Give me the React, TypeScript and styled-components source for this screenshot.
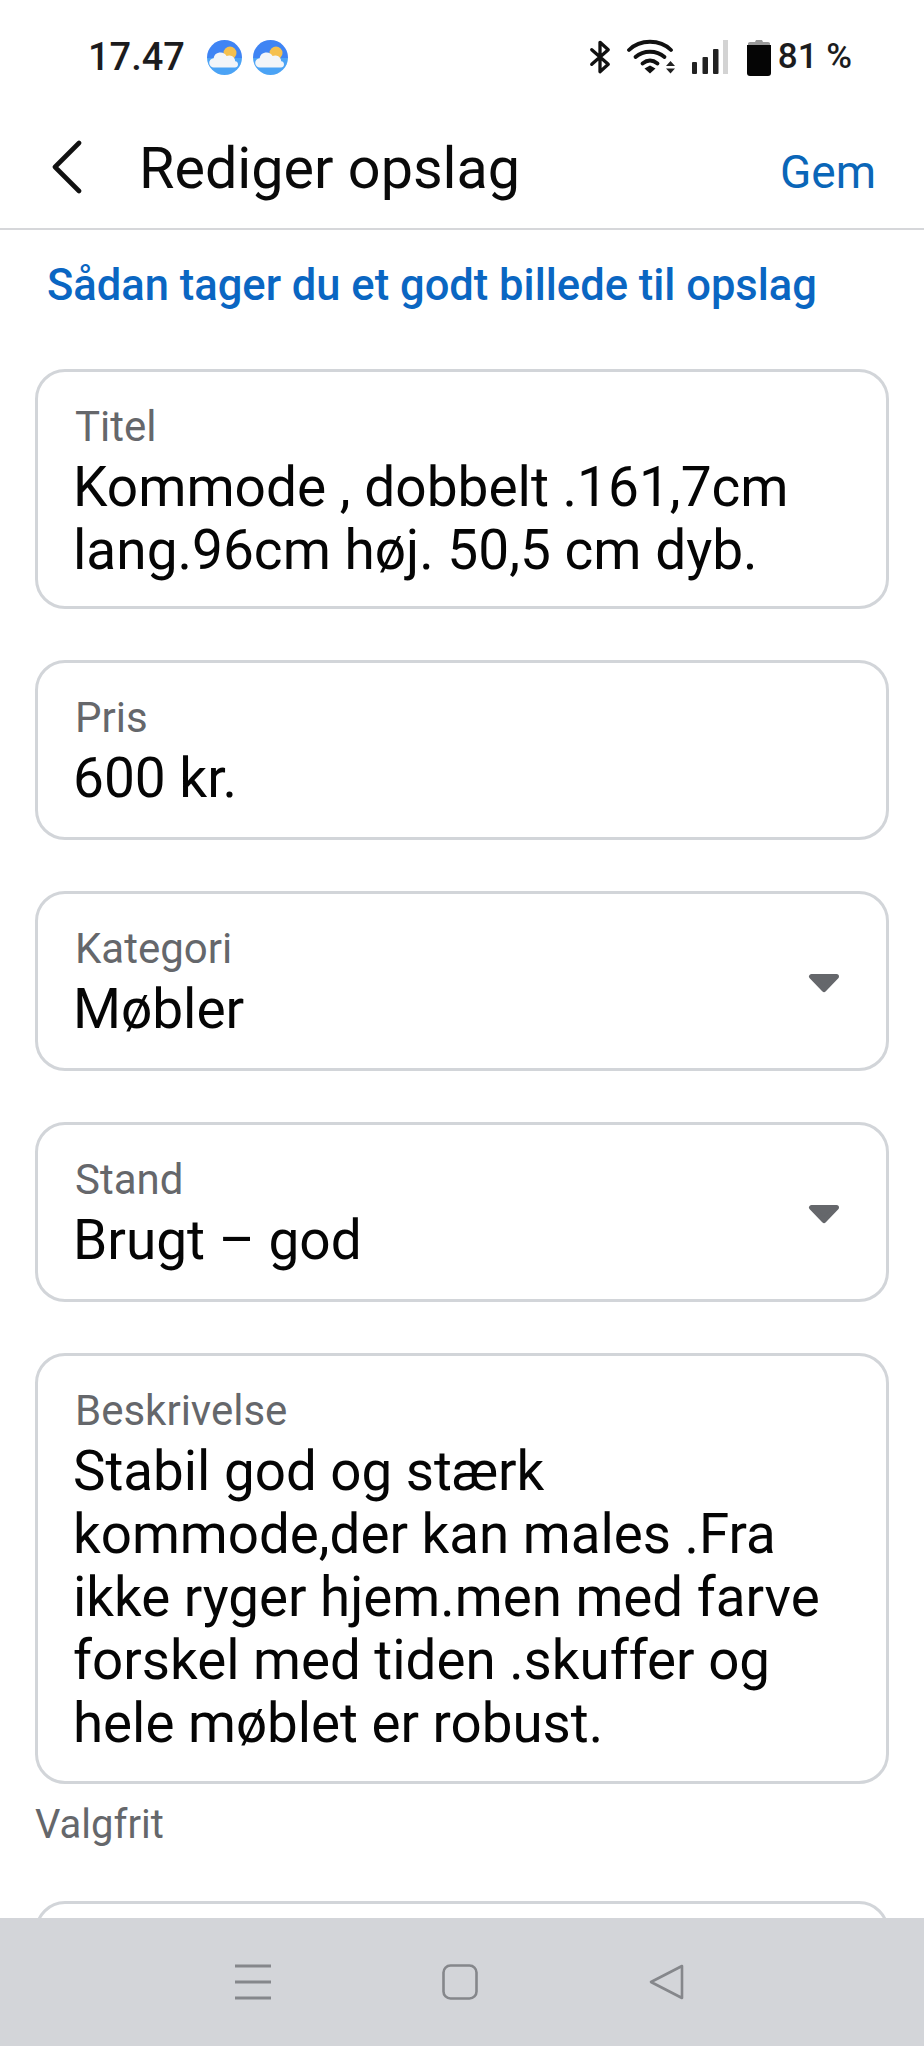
import React from "react";
import styled, { createGlobalStyle } from "styled-components";

const Global = createGlobalStyle`
  html, body { margin: 0; padding: 0; background: #fff; }
  * { box-sizing: border-box; }
  body { font-family: Roboto, "Liberation Sans", sans-serif; }
`;

const Screen = styled.div`
  width: 924px;
  height: 2046px;
  display: flex;
  flex-direction: column;
  overflow: hidden;
  background: #fff;
`;

const StatusBar = styled.div`
  height: 100px;
  flex: none;
  padding: 36px 72px 0 88px;
  display: flex;
  align-items: flex-start;
  justify-content: space-between;
`;

const StatusGroup = styled.div`
  display: flex;
  align-items: center;
`;

const Clock = styled.span`
  font-size: 38px;
  line-height: 42px;
  font-weight: 500;
  color: #1c1c1e;
  margin-right: 22px;
`;

const WeatherIcon = styled.svg`
  width: 35px;
  height: 35px;
  margin-right: 11px;
`;

const StatusIcon = styled.svg<{ $gap?: number }>`
  display: block;
  flex: none;
  margin-right: ${(p) => p.$gap ?? 0}px;
`;

const Battery = styled.span`
  font-size: 35px;
  line-height: 42px;
  font-weight: 500;
  color: #1c1c1e;
  margin-left: 7px;
  white-space: pre;
`;

const Header = styled.header`
  height: 130px;
  flex: none;
  display: flex;
  align-items: center;
  padding: 6px 48px 0 52px;
  border-bottom: 2px solid #d6d7da;
`;

const BackIcon = styled.svg`
  width: 30px;
  height: 54px;
  flex: none;
  margin-right: 57px;
`;

const Title = styled.h1`
  flex: 1;
  margin: 3px 0 0;
  font-size: 57.5px;
  line-height: 64px;
  font-weight: 400;
  color: #0a0a0a;
`;

const SaveLink = styled.span`
  font-size: 46px;
  line-height: 60px;
  color: #0a66b8;
  margin-top: 10px;
`;

const Content = styled.main`
  flex: 1;
  min-height: 0;
  overflow: hidden;
  padding: 30px 35px 0 35px;
`;

const HelpLink = styled.div`
  font-size: 43.5px;
  line-height: 52px;
  font-weight: 500;
  color: #0a66c2;
  height: 109px;
  margin-left: 12px;
`;

const Fields = styled.div`
  display: flex;
  flex-direction: column;
  gap: 51px;
`;

const Card = styled.div`
  position: relative;
  border: 3px solid #d2d5d9;
  border-radius: 30px;
  padding: 32px 35px 0;
  background: #fff;
`;

const Label = styled.div`
  font-size: 42px;
  line-height: 46px;
  color: #65676b;
  margin-left: 2px;
`;

const Value = styled.div<{ $bottom?: number; $size?: number }>`
  font-size: ${(p) => p.$size ?? 55}px;
  line-height: 63px;
  color: #050505;
  margin-top: 6px;
  padding-bottom: ${(p) => p.$bottom ?? 27}px;
`;

const Caret = styled.svg`
  position: absolute;
  right: 46px;
  top: 79px;
  width: 32px;
  height: 20px;
`;

const Hint = styled.div`
  font-size: 40px;
  line-height: 46px;
  color: #65676b;
  margin: 18px 0 53px;
`;

const EmptyCard = styled.div`
  height: 100px;
  border: 3px solid #d2d5d9;
  border-radius: 30px;
`;

const NavBar = styled.nav`
  height: 128px;
  flex: none;
  background: #d3d5d9;
  display: flex;
  align-items: flex-start;
  justify-content: center;
  gap: 171px;
  padding: 46px 5px 0 0;
`;

const NavIcon = styled.svg`
  width: 36px;
  height: 36px;
  display: block;
`;

const Weather = () => (
  <WeatherIcon viewBox="0 0 35 35">
    <defs>
      <clipPath id="wc">
        <circle cx="17.5" cy="17.5" r="17.5" />
      </clipPath>
    </defs>
    <g clipPath="url(#wc)">
      <rect width="35" height="18" fill="#3f84f4" />
      <rect y="18" width="35" height="17" fill="#4ba3f5" />
      <circle cx="23" cy="13" r="6.5" fill="#f5c04e" />
      <path
        d="M7 27.5a4.6 4.6 0 0 1-.4-9.2 7 7 0 0 1 13-2.2 6 6 0 0 1 8.6 5.2 3.2 3.2 0 0 1 2.8 3.2c0 1.8-1.4 3-3 3z"
        fill="#f2f5f9"
      />
    </g>
  </WeatherIcon>
);

const Dropdown = () => (
  <Caret viewBox="0 0 32 20">
    <path d="M3.5 3.500h25L16 16.500z" fill="#65676b" stroke="#65676b" strokeWidth="5" strokeLinejoin="round" />
  </Caret>
);

export default function App() {
  return (
    <Screen>
      <Global />
      <StatusBar>
        <StatusGroup>
          <Clock>17.47</Clock>
          <Weather />
          <Weather />
        </StatusGroup>
        <StatusGroup>
          <StatusIcon width="22" height="36" viewBox="0 0 24 36" $gap={16}>
            <path d="M3 10l18 16-9 8V2l9 8L3 26" fill="none" stroke="#111" strokeWidth="3.6" strokeLinejoin="round" strokeLinecap="round" />
          </StatusIcon>
          <StatusIcon width="48" height="36" viewBox="0 0 48 36" $gap={17}>
            <path d="M2 11C13 0 33 0 44 11" fill="none" stroke="#111" strokeWidth="3.8" strokeLinecap="round" />
            <path d="M8.500 18c8-7 21-7 29 0" fill="none" stroke="#111" strokeWidth="3.8" strokeLinecap="round" />
            <path d="M15.500 24.500c5-4 10-4 15 0" fill="none" stroke="#111" strokeWidth="3.8" strokeLinecap="round" />
            <path d="M17.500 29.500l5.500-3 5.500 3-5.500 5z" fill="#111" />
            <path d="M39 27h9l-4.500-5zM39 29.500h9l-4.500 5z" fill="#222" />
          </StatusIcon>
          <StatusIcon width="36" height="36" viewBox="0 0 36 36" $gap={19}>
            <rect x="0" y="23" width="5" height="12" rx="1" fill="#222" />
            <rect x="10.500" y="18" width="5.500" height="17" rx="1" fill="#222" />
            <rect x="21" y="10" width="5.500" height="25" rx="1" fill="#222" />
            <rect x="31" y="1" width="5" height="34" fill="#d3d3d3" />
          </StatusIcon>
          <StatusIcon width="24" height="37" viewBox="0 0 24 37">
            <path d="M1 4.500Q1 3 3 3h5l1-2h6l1 2h5q2 0 2 1.500V6H1z" fill="#9a9a9a" />
            <path d="M0 6h24v28q0 3-3 3H3q-3 0-3-3z" fill="#050505" />
          </StatusIcon>
          <Battery>81 %</Battery>
        </StatusGroup>
      </StatusBar>
      <Header>
        <BackIcon viewBox="0 0 30 54">
          <path d="M27 3L3 27l24 24" fill="none" stroke="#111" strokeWidth="4.600" strokeLinecap="round" strokeLinejoin="round" />
        </BackIcon>
        <Title>Rediger opslag</Title>
        <SaveLink>Gem</SaveLink>
      </Header>
      <Content>
        <HelpLink>Sådan tager du et godt billede til opslag</HelpLink>
        <Fields>
          <Card>
            <Label>Titel</Label>
            <Value $bottom={24}>
              Kommode , dobbelt .161,7cm
              <br />
              lang.96cm høj. 50,5 cm dyb.
            </Value>
          </Card>
          <Card>
            <Label>Pris</Label>
            <Value>600 kr.</Value>
          </Card>
          <Card>
            <Label>Kategori</Label>
            <Value>Møbler</Value>
            <Dropdown />
          </Card>
          <Card>
            <Label>Stand</Label>
            <Value>Brugt – god</Value>
            <Dropdown />
          </Card>
          <Card>
            <Label>Beskrivelse</Label>
            <Value $bottom={26} $size={54.7}>
              Stabil god og stærk
              <br />
              kommode,der kan males .Fra
              <br />
              ikke ryger hjem.men med farve
              <br />
              forskel med tiden .skuffer og
              <br />
              hele møblet er robust.
            </Value>
          </Card>
        </Fields>
        <Hint>Valgfrit</Hint>
        <EmptyCard />
      </Content>
      <NavBar>
        <NavIcon viewBox="0 0 36 36">
          <path d="M0 2h36M0 18h36M0 34h36" stroke="#85878b" strokeWidth="3.200" fill="none" />
        </NavIcon>
        <NavIcon viewBox="0 0 36 36">
          <rect x="1.500" y="1.500" width="33" height="33" rx="7" stroke="#85878b" strokeWidth="2.600" fill="none" />
        </NavIcon>
        <NavIcon viewBox="0 0 36 36">
          <path d="M33 2L2 18l31 16z" stroke="#85878b" strokeWidth="2.600" strokeLinejoin="round" fill="none" />
        </NavIcon>
      </NavBar>
    </Screen>
  );
}
